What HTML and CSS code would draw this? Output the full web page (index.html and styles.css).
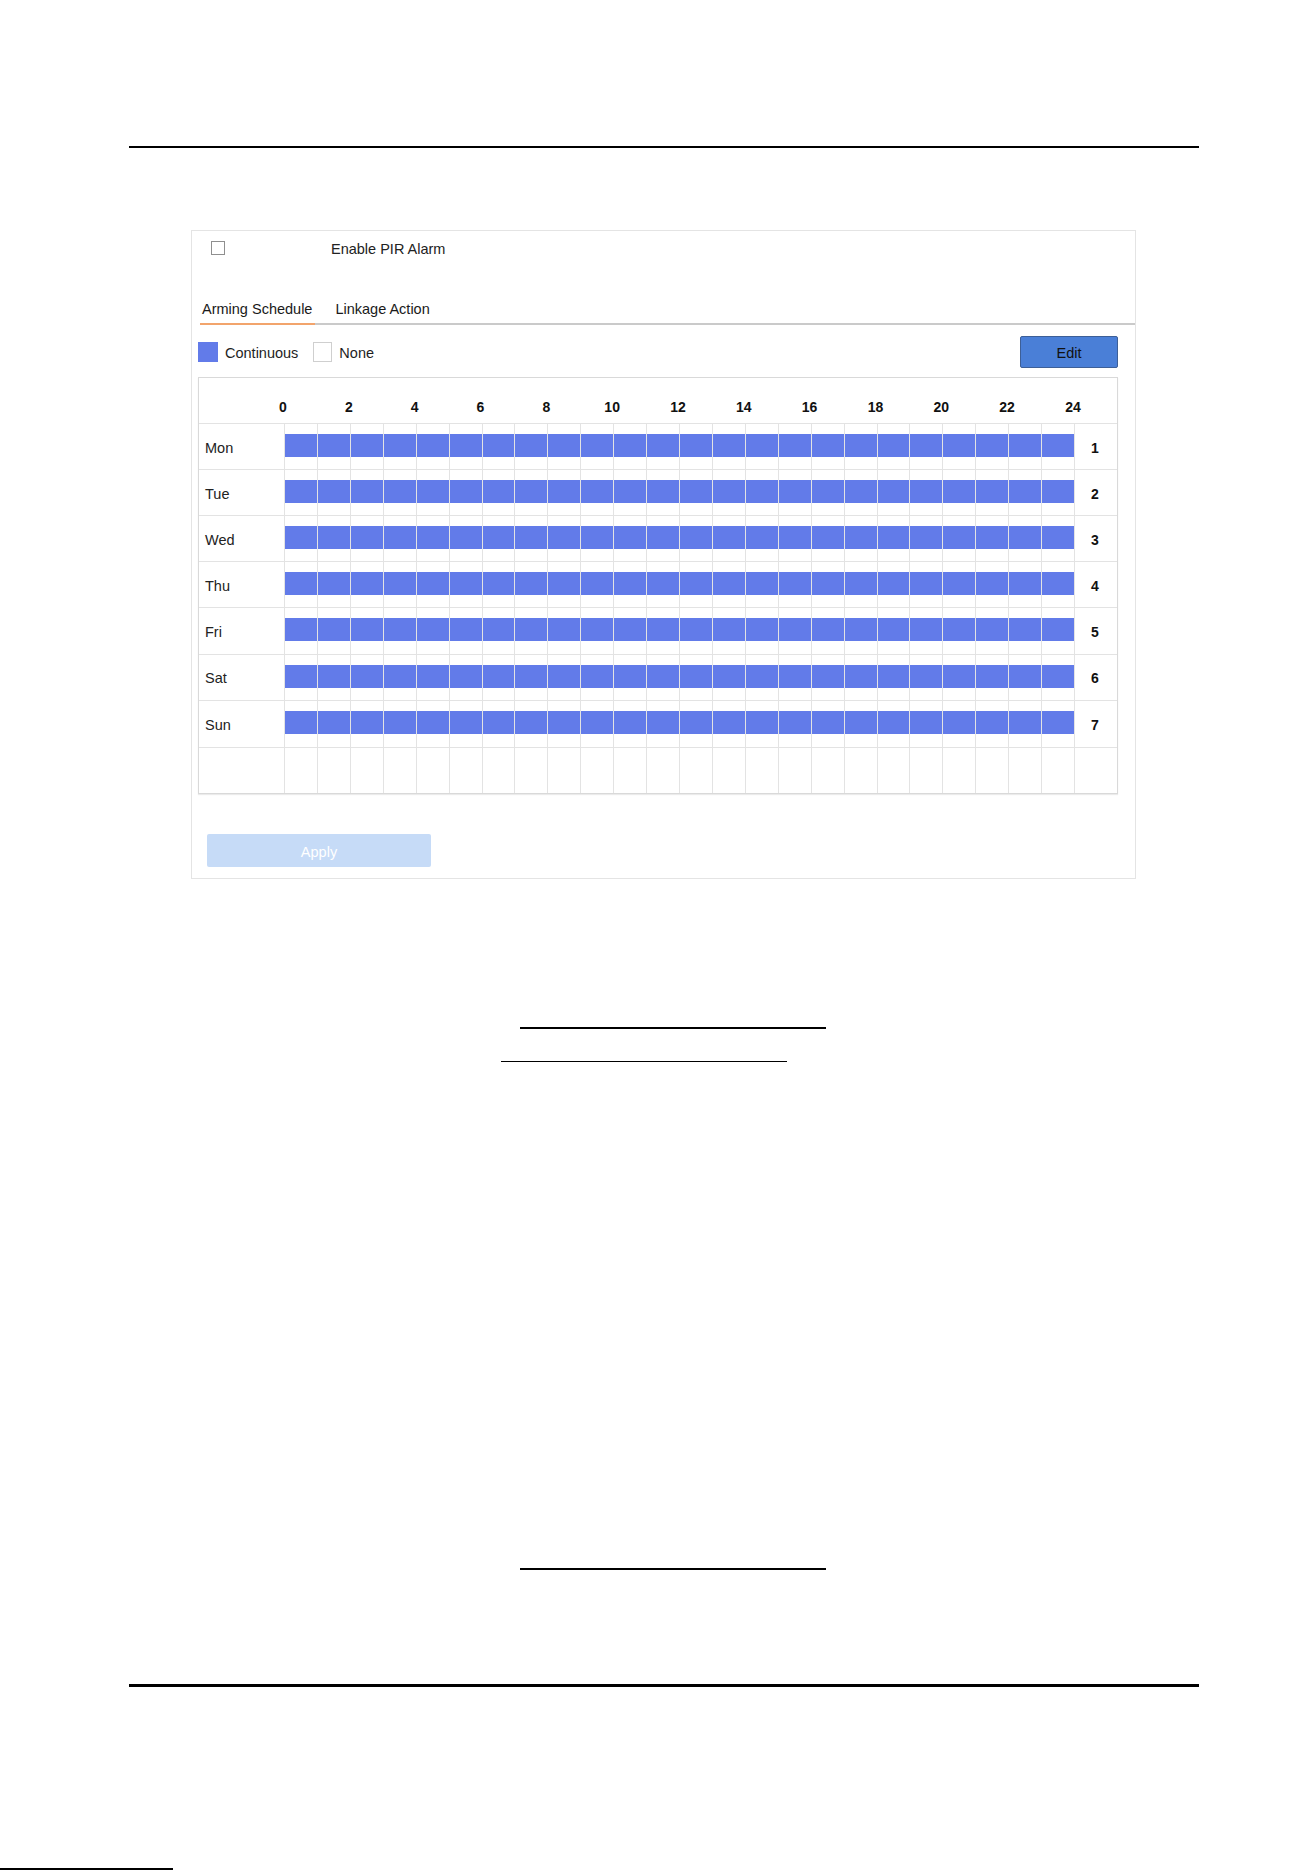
FILE: index.html
```html
<!DOCTYPE html>
<html lang="en">
  <head>
    <meta charset="UTF-8" />
    <meta name="viewport" content="width=device-width, initial-scale=1.0" />
    <title>PIR Alarm</title>
    <link rel="stylesheet" href="styles.css">
  </head>
  <body>
    <div class="page">
      <div class="rule"></div>

      <div class="panel">
        <div class="pir-row">
          <span class="checkbox"></span>
          <span class="pir-label">Enable PIR Alarm</span>
        </div>

        <div class="tabs">
          <div class="tab active">Arming Schedule</div>
          <div class="tab">Linkage Action</div>
        </div>

        <div class="legend-row">
          <span class="swatch continuous"></span>
          <span class="legend-text">Continuous</span>
          <span class="swatch none"></span>
          <span class="legend-text">None</span>
          <button class="edit-btn">Edit</button>
        </div>

        <div class="schedule">
          <div class="hours" id="hours"></div>
          <div id="days">
            <!-- day rows are built below -->
          </div>
        </div>

        <button class="apply-btn">Apply</button>
      </div>

      <div class="blank-line line-a"></div>
      <div class="blank-line line-b"></div>
      <div class="blank-line line-c"></div>

      <div class="rule rule-bottom"></div>
    </div>
    <div class="edge-line"></div>

    <script>
      const days = ["Mon", "Tue", "Wed", "Thu", "Fri", "Sat", "Sun"];

      const hours = document.getElementById("hours");
      hours.appendChild(document.createElement("span"));
      for (let h = 0; h <= 24; h += 2) {
        const label = document.createElement("span");
        label.textContent = h;
        hours.appendChild(label);
      }
      hours.appendChild(document.createElement("span"));

      function buildRow(name, num) {
        const row = document.createElement("div");
        row.classList.add("day-row");
        const dayName = document.createElement("div");
        dayName.classList.add("day-name");
        dayName.textContent = name;
        row.appendChild(dayName);
        for (let i = 0; i < 24; i++) {
          const slot = document.createElement("div");
          slot.classList.add("slot");
          if (name) {
            const bar = document.createElement("div");
            bar.classList.add("bar");
            slot.appendChild(bar);
          }
          row.appendChild(slot);
        }
        const dayNum = document.createElement("div");
        dayNum.classList.add("day-num");
        dayNum.textContent = num;
        row.appendChild(dayNum);
        return row;
      }

      const dayList = document.getElementById("days");
      days.forEach((day, index) => {
        dayList.appendChild(buildRow(day, index + 1));
      });
      dayList.appendChild(buildRow("", "")); // empty row at the bottom
    </script>
  </body>
</html>
```

FILE: styles.css
```css
body {
  margin: 0;
  font-family: "Liberation Sans", Arial, sans-serif;
  font-size: 14.5px;
  color: #1e1e1e;
  background: #fff;
}
.page {
  padding: 146px 114px 0 129px;
}
.rule {
  height: 2px;
  background: #000;
}
.rule-bottom {
  margin-top: 114px;
  height: 3px;
}
.panel {
  margin: 82px 0 0 62px;
  width: 945px;
  box-sizing: border-box;
  border: 1px solid #e4e4e4;
  padding-bottom: 11px;
}
.pir-row {
  display: flex;
  align-items: center;
  padding: 11px 0 0 19px;
  height: 14px;
}
.checkbox {
  width: 14px;
  height: 14px;
  box-sizing: border-box;
  border: 1px solid #8f8f8f;
  margin-top: -2px;
}
.pir-label {
  margin-left: 106px;
  color: #222;
}
.tabs {
  display: flex;
  margin: 44px 0 0 8px;
  border-bottom: 2px solid #cacaca;
}
.tab {
  line-height: 18px;
  padding: 0 3px 5px 2px;
  color: #1a1a1a;
}
.tab + .tab {
  margin-left: 18px;
}
.tab.active {
  border-bottom: 2px solid #f2a46c;
  margin-bottom: -2px;
}
.legend-row {
  display: flex;
  align-items: center;
  margin-top: 11px;
  padding: 0 17px 0 6px;
  height: 32px;
}
.swatch {
  width: 20px;
  height: 20px;
  box-sizing: border-box;
}
.swatch.continuous {
  background: #627be9;
}
.swatch.none {
  width: 19px;
  margin-left: 15px;
  border: 1px solid #cfcfcf;
}
.legend-text {
  margin-left: 7px;
  padding-top: 2px;
}
.edit-btn {
  margin-left: auto;
  width: 98px;
  height: 32px;
  background: #4a7fd7;
  border: 1px solid #3d5f97;
  border-radius: 2px;
  font-family: inherit;
  font-size: 14.5px;
  color: #111;
  padding: 2px 0 0;
}
.schedule {
  --hour: 32.917px;
  margin: 9px 0 0 6px;
  width: 920px;
  box-sizing: border-box;
  border: 1px solid #d9d9d9;
  box-shadow: 0 1px 1px rgba(0, 0, 0, 0.08);
}
.hours {
  display: grid;
  grid-template-columns: calc(85px - var(--hour)) repeat(13, calc(var(--hour) * 2)) 1fr;
  height: 45px;
}
.hours span {
  text-align: center;
  padding: 20px 2px 0 0;
  line-height: 18px;
  font-size: 14px;
  font-weight: bold;
  color: #111;
}
.day-row {
  display: grid;
  grid-template-columns: 85px repeat(24, 1fr) 43px;
  height: 46px;
  box-sizing: border-box;
  border-top: 1px solid #e3e3e3;
}
.day-row:nth-child(n+5) {
  height: 46.5px;
}
.day-name {
  display: flex;
  align-items: center;
  padding: 2px 0 0 6px;
  color: #222;
}
.slot {
  border-left: 1px solid #e3e3e3;
}
.bar {
  margin-top: 10px;
  height: 23px;
  background: #627be9;
}
.day-num {
  display: flex;
  align-items: center;
  justify-content: center;
  padding: 2px 2px 0 0;
  border-left: 1px solid #e3e3e3;
  font-size: 14px;
  font-weight: bold;
  color: #111;
}
.apply-btn {
  display: block;
  margin: 40px 0 0 15px;
  width: 224px;
  height: 33px;
  padding: 2px 0 0;
  border: none;
  border-radius: 2px;
  background: #c6dbf7;
  color: #fff;
  font-family: inherit;
  font-size: 14.5px;
}
.blank-line {
  background: #000;
}
.line-a {
  margin: 148px 0 0 391px;
  width: 306px;
  height: 2px;
}
.line-b {
  margin: 32px 0 0 372px;
  width: 286px;
  height: 1px;
}
.line-c {
  margin: 506px 0 0 391px;
  width: 306px;
  height: 2px;
}
.edge-line {
  margin-top: 181px;
  width: 173px;
  height: 2px;
  background: #000;
}
```
